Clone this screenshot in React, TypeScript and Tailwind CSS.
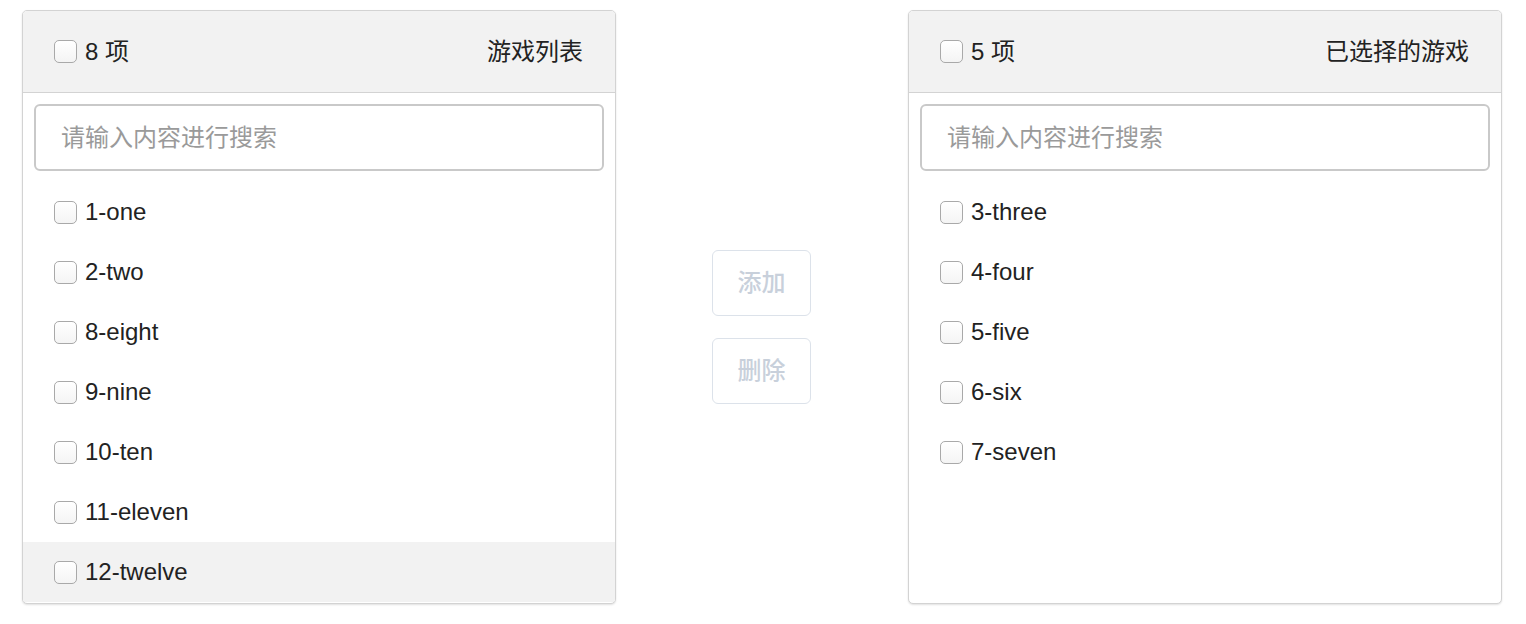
import { useState } from 'react';

type Item = { key: number; label: string };

const leftItems: Item[] = [
  { key: 1, label: '1-one' },
  { key: 2, label: '2-two' },
  { key: 8, label: '8-eight' },
  { key: 9, label: '9-nine' },
  { key: 10, label: '10-ten' },
  { key: 11, label: '11-eleven' },
  { key: 12, label: '12-twelve' },
];

const rightItems: Item[] = [
  { key: 3, label: '3-three' },
  { key: 4, label: '4-four' },
  { key: 5, label: '5-five' },
  { key: 6, label: '6-six' },
  { key: 7, label: '7-seven' },
];

function Box() {
  return (
    <span className="w-[23px] h-[23px] shrink-0 rounded-[5px] border border-[#a9a9a9] bg-gradient-to-b from-white to-[#f4f4f4] shadow-[inset_0_1px_0_#fff]" />
  );
}

function Panel({
  title,
  items,
  count,
  hovered,
}: {
  title: string;
  items: Item[];
  count: number;
  hovered?: number;
}) {
  const [query, setQuery] = useState('');

  return (
    <div className="w-[594px] h-[594px] shrink-0 flex flex-col bg-white border border-[#d3d3d3] rounded-[5px] shadow-[0_1px_2px_rgba(0,0,0,0.12)] overflow-hidden">
      {/* Header */}
      <div className="h-[82px] shrink-0 flex items-center justify-between pl-[31px] pr-[32px] bg-[#f2f2f2] border-b border-[#d3d3d3]">
        <label className="flex items-center gap-[8px] text-[24px] text-[#222]">
          <Box />
          <span>{count} 项</span>
        </label>
        <span className="text-[24px] text-[#222]">{title}</span>
      </div>

      {/* Search */}
      <div className="p-[11px]">
        <input
          value={query}
          onChange={(e) => setQuery(e.target.value)}
          placeholder="请输入内容进行搜索"
          className="w-full h-[67px] px-[25px] border-2 border-[#c9c9c9] rounded-[6px] text-[24px] text-[#333] placeholder:text-[#9a9a9a] outline-none"
        />
      </div>

      {/* List */}
      <ul className="flex-1 overflow-hidden">
        {items.map((item) => (
          <li
            key={item.key}
            className={`h-[60px] flex items-center gap-[8px] pl-[31px] text-[24px] text-[#222] ${
              item.key === hovered ? 'bg-[#f2f2f2]' : ''
            }`}
          >
            <Box />
            <span>{item.label}</span>
          </li>
        ))}
      </ul>
    </div>
  );
}

export default function App() {
  return (
    <div
      className="w-[1526px] h-[624px] bg-white flex items-start pl-[22px] pt-[10px]"
      style={{ fontFamily: '"Liberation Sans", "Noto Sans CJK SC", sans-serif' }}
    >
      <Panel title="游戏列表" items={leftItems} count={8} hovered={12} />

      {/* Transfer buttons */}
      <div className="flex flex-col gap-[22px] pt-[240px] ml-[96px] mr-[97px]">
        <button className="w-[99px] h-[66px] rounded-[6px] border border-[#dce2ea] bg-white text-[24px] text-[#c8d0db] font-medium cursor-not-allowed">
          添加
        </button>
        <button className="w-[99px] h-[66px] rounded-[6px] border border-[#dce2ea] bg-white text-[24px] text-[#c8d0db] font-medium cursor-not-allowed">
          删除
        </button>
      </div>

      <Panel title="已选择的游戏" items={rightItems} count={5} />
    </div>
  );
}
